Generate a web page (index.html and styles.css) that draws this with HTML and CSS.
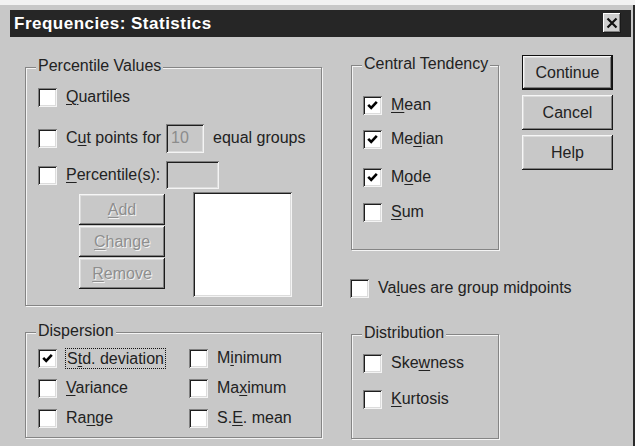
FILE: index.html
```html
<!DOCTYPE html>
<html lang="en">
<head>
<meta charset="utf-8">
<title>Frequencies: Statistics</title>
<link rel="stylesheet" href="styles.css">
</head>
<body>
<div class="window">
  <div class="titlebar">
    <span class="title">Frequencies: Statistics</span>
    <span class="close-btn">
      <svg width="12" height="12" viewBox="0 0 12 12"><path d="M1.5 1.5 L10.5 10.5 M10.5 1.5 L1.5 10.5" stroke="#111" stroke-width="2.2" fill="none"/></svg>
    </span>
  </div>

  <div class="content">
    <div class="col col-left">
      <div class="group group-pct">
        <span class="legend">Percentile Values</span>
        <div class="row row-q">
          <span class="check"></span><span class="label"><u>Q</u>uartiles</span>
        </div>
        <div class="row row-cut">
          <span class="check"></span><span class="label label-fixed">C<u>u</u>t points for</span>
          <span class="field field-cut">10</span>
          <span class="label label-after">equal groups</span>
        </div>
        <div class="row row-pctile">
          <span class="check"></span><span class="label label-fixed"><u>P</u>ercentile(s):</span>
          <span class="field field-pctile"></span>
        </div>
        <div class="pct-list">
          <div class="pct-buttons">
            <button class="btn btn-small" disabled><u>A</u>dd</button>
            <button class="btn btn-small" disabled><u>C</u>hange</button>
            <button class="btn btn-small" disabled><u>R</u>emove</button>
          </div>
          <div class="listbox"></div>
        </div>
      </div>

      <div class="group group-disp">
        <span class="legend">Dispersion</span>
        <div class="disp-grid">
          <div class="row"><span class="check checked"><svg viewBox="0 0 15 15"><path d="M3.2 6.8 L6.2 9.8 L11.8 3.8" stroke="#000" stroke-width="2.6" fill="none"/></svg></span><span class="label focus">S<u>t</u>d. deviation</span></div>
          <div class="row"><span class="check"></span><span class="label">M<u>i</u>nimum</span></div>
          <div class="row"><span class="check"></span><span class="label"><u>V</u>ariance</span></div>
          <div class="row"><span class="check"></span><span class="label">Ma<u>x</u>imum</span></div>
          <div class="row"><span class="check"></span><span class="label">Ra<u>n</u>ge</span></div>
          <div class="row"><span class="check"></span><span class="label">S.<u>E</u>. mean</span></div>
        </div>
      </div>
    </div>

    <div class="col col-mid">
      <div class="group group-central">
        <span class="legend">Central Tendency</span>
        <div class="row row-mean"><span class="check checked"><svg viewBox="0 0 15 15"><path d="M3.2 6.8 L6.2 9.8 L11.8 3.8" stroke="#000" stroke-width="2.6" fill="none"/></svg></span><span class="label"><u>M</u>ean</span></div>
        <div class="row row-median"><span class="check checked"><svg viewBox="0 0 15 15"><path d="M3.2 6.8 L6.2 9.8 L11.8 3.8" stroke="#000" stroke-width="2.6" fill="none"/></svg></span><span class="label">Me<u>d</u>ian</span></div>
        <div class="row row-mode"><span class="check checked"><svg viewBox="0 0 15 15"><path d="M3.2 6.8 L6.2 9.8 L11.8 3.8" stroke="#000" stroke-width="2.6" fill="none"/></svg></span><span class="label">M<u>o</u>de</span></div>
        <div class="row row-sum"><span class="check"></span><span class="label"><u>S</u>um</span></div>
      </div>

      <div class="row row-midpoints"><span class="check"></span><span class="label">Va<u>l</u>ues are group midpoints</span></div>

      <div class="group group-dist">
        <span class="legend">Distribution</span>
        <div class="row row-skew"><span class="check"></span><span class="label">Ske<u>w</u>ness</span></div>
        <div class="row row-kurt"><span class="check"></span><span class="label"><u>K</u>urtosis</span></div>
      </div>
    </div>

    <div class="col col-right">
      <button class="btn btn-main btn-default">Continue</button>
      <button class="btn btn-main">Cancel</button>
      <button class="btn btn-main">Help</button>
    </div>
  </div>
</div>
</body>
</html>
```

FILE: styles.css
```css
html, body {
  margin: 0;
  padding: 0;
  background: #f2f2f2;
}

body {
  font-family: "Liberation Sans", Arial, sans-serif;
  font-size: 16px;
  line-height: 18px;
  color: #222;
}

u {
  text-decoration-thickness: 1px;
  text-underline-offset: 2px;
}

/* dialog frame */
.window {
  margin-top: 5px;
  padding-top: 5px;
  width: 633px;
  height: 436px;
  background: #c8c8c8;
  border-right: 2px solid #2a2a2a;
  overflow: hidden;
}

.titlebar {
  position: relative;
  margin-left: 10px;
  width: 621px;
  height: 27px;
  background: #262626;
  display: flex;
  align-items: center;
}

.title {
  padding-left: 4px;
  color: #fff;
  font-weight: bold;
  font-size: 17px;
  letter-spacing: 0.5px;
}

.close-btn {
  position: absolute;
  top: 3px;
  right: 10px;
  width: 18px;
  height: 20px;
  background: #cfcfcf;
  box-shadow: inset -1px -1px #1a1a1a, inset 1px 1px #fff, inset -2px -2px #808080;
  display: flex;
  align-items: center;
  justify-content: center;
}

/* three columns of the dialog body */
.content {
  display: flex;
  padding-left: 25px;
}

.col {
  display: flex;
  flex-direction: column;
}

.col-left {
  width: 297px;
  padding-top: 30px;
}

.col-mid {
  width: 148px;
  margin-left: 29px;
  padding-top: 28px;
}

.col-right {
  width: 91px;
  margin-left: 23px;
  padding-top: 18px;
  gap: 5px;
}

/* etched group boxes */
.group {
  position: relative;
  box-sizing: border-box;
  border: 1px solid #858585;
  box-shadow: inset 1px 1px 0 #f4f4f4, 1px 1px 0 #f4f4f4;
}

.legend {
  position: absolute;
  top: -11px;
  left: 10px;
  padding: 0 2px;
  background: #c8c8c8;
  line-height: 18px;
  white-space: nowrap;
}

/* checkbox rows */
.row {
  display: flex;
  align-items: center;
  height: 20px;
  white-space: nowrap;
}

.check {
  flex: none;
  width: 19px;
  height: 19px;
  box-sizing: border-box;
  background: #fff;
  box-shadow: inset 1px 1px #808080, inset -1px -1px #f4f4f4, inset 2px 2px #1e1e1e, inset -2px -2px #dcdcdc;
  display: flex;
  align-items: center;
  justify-content: center;
}

.check svg {
  width: 15px;
  height: 15px;
}

.label {
  margin-left: 9px;
}

.label-fixed {
  flex: none;
  width: 100px;
}

.focus {
  margin-left: 8px;
  padding: 1px;
  border: 1px dotted #111;
  line-height: 17px;
}

/* sunken fields */
.field,
.listbox {
  flex: none;
  box-sizing: border-box;
  box-shadow: inset 1px 1px #808080, inset -1px -1px #f4f4f4, inset 2px 2px #1e1e1e, inset -2px -2px #dcdcdc;
}

.field {
  background: #c8c8c8;
  height: 29px;
  color: #8c8c8c;
  padding: 5px 0 0 5px;
}

.field-cut {
  width: 38px;
}

.field-pctile {
  width: 53px;
  height: 28px;
}

.label-after {
  margin-left: 9px;
}

/* percentile values */
.group-pct {
  padding: 14px 0 8px 12px;
}

.group-pct .row {
  height: 30px;
}

.group-pct .row-cut {
  margin-top: 11px;
}

.group-pct .row-pctile {
  margin-top: 7px;
}

.pct-list {
  display: flex;
  align-items: flex-start;
  margin-top: 2px;
  margin-left: 41px;
}

.pct-buttons {
  display: flex;
  flex-direction: column;
  gap: 1px;
  padding-top: 2px;
}

.listbox {
  width: 99px;
  height: 105px;
  margin-left: 28px;
  background: #fff;
}

/* buttons */
.btn {
  box-sizing: border-box;
  border: none;
  margin: 0;
  padding: 0;
  background: #c8c8c8;
  font-family: "Liberation Sans", Arial, sans-serif;
  font-size: 16px;
  color: #222;
  box-shadow: inset -1px -1px #1a1a1a, inset 1px 1px #f6f6f6, inset -2px -2px #808080, inset 2px 2px #dcdcdc;
}

.btn-small {
  width: 86px;
  height: 31px;
  color: #8e8e8e;
  text-shadow: 1px 1px 0 #f4f4f4;
}

.btn-small u {
  text-decoration-color: #8e8e8e;
}

.btn-main {
  width: 91px;
  height: 35px;
}

.btn-default {
  border: 1px solid #111;
}

/* dispersion */
.group-disp {
  margin-top: 26px;
  padding: 15px 0 9px 12px;
}

.disp-grid {
  display: grid;
  grid-template-columns: 151px 1fr;
  grid-auto-rows: 20px;
  row-gap: 10px;
}

/* central tendency */
.group-central {
  padding: 29px 0 27px 11px;
}

.row-median {
  margin-top: 14px;
}

.row-mode {
  margin-top: 18px;
}

.row-sum {
  margin-top: 15px;
}

.row-midpoints {
  margin-top: 28px;
  margin-left: -1px;
}

/* distribution */
.group-dist {
  margin-top: 36px;
  padding: 18px 0 29px 11px;
}

.row-kurt {
  margin-top: 16px;
}
```
